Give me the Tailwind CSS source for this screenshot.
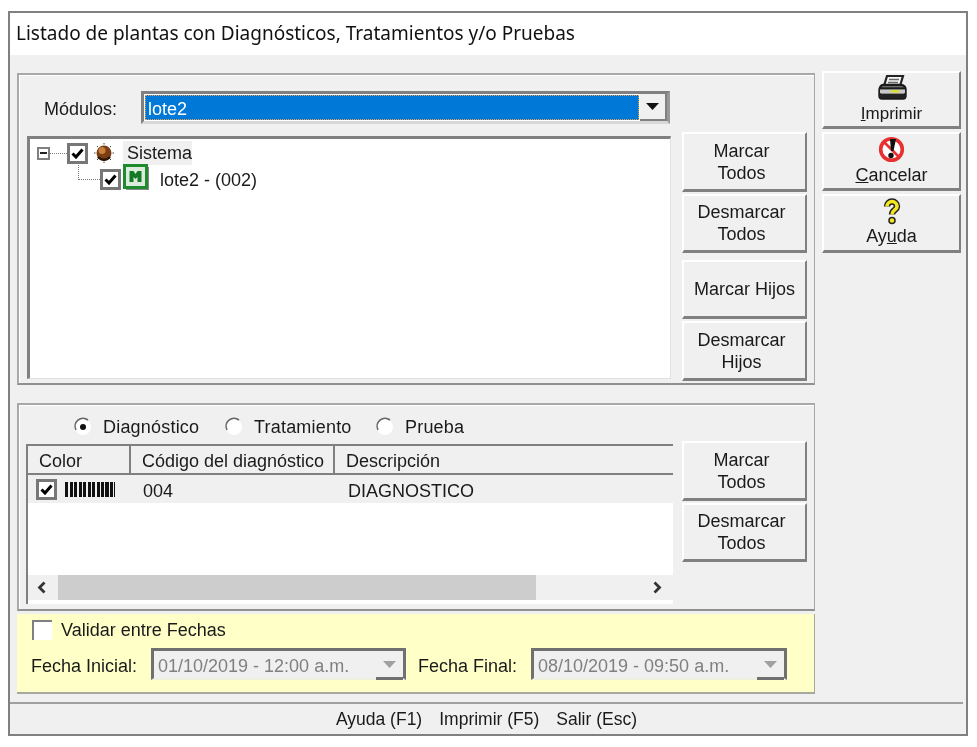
<!DOCTYPE html>
<html lang="es">
<head>
  <meta charset="UTF-8" />
  <title>Listado de plantas</title>
  <script src="https://cdn.jsdelivr.net/npm/@tailwindcss/browser@4"></script>
</head>
<body class="bg-white font-['Liberation_Sans',sans-serif] text-[18px] leading-none text-[#1a1a1a]">
  <div class="ml-[8px] mt-[11px] w-[960px] h-[725px] border-2 border-[#808080] bg-[#f0f0f0] flex flex-col blur-[0.35px]">

    <!-- Title -->
    <div class="h-[42px] shrink-0 bg-white pl-[6px] pb-[2px] flex items-center font-['Noto_Sans',sans-serif] text-[19px] text-[#111]">Listado de plantas con Diagnósticos, Tratamientos y/o Pruebas</div>

    <div class="flex-1 flex pl-[7px]">
      <!-- Left column -->
      <div class="w-[798px]">

        <!-- Modules panel -->
        <section class="mt-[18px] h-[312px] border-2 border-r border-[#a8a8a8] border-b-[#909090] shadow-[inset_1px_1px_0_#fff] flex pl-[8px]">
          <div class="w-[644px]">
            <div class="mt-[16px] flex items-center h-[33px]">
              <span class="ml-[17px] w-[97px] pt-[3px]">Módulos:</span>
              <div class="w-[529px] h-[33px] border-[3px] border-[#808080] border-r-[#999] border-b-[#d8d8d8] flex bg-white">
                <div class="flex-1 m-[1px] bg-[#0078d7] border border-dotted border-[#e8a050] text-white pl-[2px] pt-[3px] flex items-center">lote2</div>
                <div class="w-[27px] bg-[#f0f0f0] border-r-2 border-b-2 border-[#808080] flex items-center justify-center">
                  <svg width="13" height="7" viewBox="0 0 13 7"><path d="M0 0h13L6.500 7z" fill="#111"/></svg>
                </div>
              </div>
            </div>

            <!-- Tree -->
            <div class="relative mt-[12px] h-[243px] bg-white border-t-[3px] border-l-[3px] border-[#808080] border-r border-b border-r-[#e0e0e0] border-b-[#e0e0e0] pt-[2px]">
              <div class="flex items-center h-[24px]">
                <span class="ml-[7px] w-[13px] h-[13px] border-2 border-[#808080] flex items-center justify-center"><span class="w-[7px] h-[2px] bg-[#222]"></span></span>
                <span class="w-[17px] border-t border-dotted border-[#808080]"></span>
                <span class="w-[21px] h-[21px] border-[3px] border-[#777] bg-white flex items-center justify-center">
                  <svg width="13" height="11" viewBox="0 0 13 11"><path d="M1.500 5.500l3.500 3.500 6.500-7.500" fill="none" stroke="#000" stroke-width="3"/></svg>
                </span>
                <svg class="ml-[6px]" width="20" height="20" viewBox="0 0 20 20">
                  <circle cx="10" cy="10" r="7.500" fill="#7a3d14"/>
                  <circle cx="8" cy="7.500" r="3.500" fill="#c9803f"/>
                  <path d="M4 14a8 8 0 0 0 12 0" fill="none" stroke="#2b1606" stroke-width="2.500"/>
                  <path d="M10 0v1.500M10 18.500v1.500M0 10h1.500M18.500 10h1.500M3 3l1 1M17 3l-1 1M3 17l1-1M17 17l-1-1" stroke="#444"/>
                </svg>
                <span class="ml-[9px] w-[69px] h-[24px] bg-[#f0f0f0] pl-[4px] flex items-center">Sistema</span>
              </div>
              <div class="flex items-center h-[26px] mt-[1px]">
                <span class="ml-[70px] w-[21px] h-[21px] border-[3px] border-[#777] bg-white flex items-center justify-center">
                  <svg width="13" height="11" viewBox="0 0 13 11"><path d="M1.500 5.500l3.500 3.500 6.500-7.500" fill="none" stroke="#000" stroke-width="3"/></svg>
                </span>
                <svg class="ml-[2px] -mt-[4px]" width="26" height="26" viewBox="0 0 26 26">
                  <rect x="3" y="3" width="23" height="23" fill="#888"/>
                  <rect x="1.500" y="1.500" width="22" height="22" fill="#dcecdc" stroke="#1f8a2e" stroke-width="3"/>
                  <path d="M6.500 7h4l2 3 2-3h4v11h-4v-5l-2 2-2-2v5h-4z" fill="#157a25"/>
                </svg>
                <span class="ml-[11px] pt-[2px]">lote2 - (002)</span>
              </div>
              <!-- connector lines -->
              <span class="absolute left-[48px] top-[24px] h-[17px] w-[22px] border-l border-b border-dotted border-[#777]"></span>
            </div>
          </div>

          <div class="ml-[11px] mt-[57px] w-[125px] flex flex-col">
            <button class="h-[60px] pr-[6px] border-2 border-t-white border-l-white border-r-[#808080] border-b-[3px] border-b-[#808080] leading-[22px]">Marcar<br>Todos</button>
            <button class="mt-[2px] h-[59px] pr-[6px] border-2 border-t-white border-l-white border-r-[#808080] border-b-[3px] border-b-[#808080] leading-[22px]">Desmarcar<br>Todos</button>
            <button class="mt-[7px] h-[59px] border-2 border-t-white border-l-white border-r-[#808080] border-b-[3px] border-b-[#808080] leading-[22px]">Marcar Hijos</button>
            <button class="mt-[2px] h-[60px] pr-[6px] border-2 border-t-white border-l-white border-r-[#808080] border-b-[3px] border-b-[#808080] leading-[22px]">Desmarcar<br>Hijos</button>
          </div>
        </section>

        <!-- Diagnostics panel -->
        <section class="mt-[18px] h-[208px] border-2 border-r border-[#a8a8a8] border-b-[#909090] shadow-[inset_1px_1px_0_#fff] flex pl-[7px]">
          <div class="w-[647px]">
            <div class="h-[39px] pt-[4px] flex items-center tracking-[0.2px]">
              <svg class="ml-[47px]" width="20" height="20" viewBox="0 0 20 20"><circle cx="10" cy="10" r="8" fill="#fff"/><path d="M3 13A8 8 0 0 1 15 3" fill="none" stroke="#666" stroke-width="1.600"/><circle cx="10" cy="10" r="3" fill="#111"/></svg>
              <span class="ml-[10px] w-[96px]">Diagnóstico</span>
              <svg class="ml-[25px]" width="20" height="20" viewBox="0 0 20 20"><circle cx="10" cy="10" r="8" fill="#fff"/><path d="M3 13A8 8 0 0 1 15 3" fill="none" stroke="#666" stroke-width="1.600"/></svg>
              <span class="ml-[10px] w-[96px]">Tratamiento</span>
              <svg class="ml-[25px]" width="20" height="20" viewBox="0 0 20 20"><circle cx="10" cy="10" r="8" fill="#fff"/><path d="M3 13A8 8 0 0 1 15 3" fill="none" stroke="#666" stroke-width="1.600"/></svg>
              <span class="ml-[10px]">Prueba</span>
            </div>
            <div class="h-[160px] border-t-[2px] border-l-[2px] border-[#808080] bg-white flex flex-col">
              <div class="h-[29px] shrink-0 flex bg-[#f0f0f0] border-b-2 border-[#808080]">
                <div class="w-[103px] pl-[11px] pt-[3px] border-r-2 border-[#808080] flex items-center">Color</div>
                <div class="w-[204px] pl-[11px] pt-[3px] border-r-2 border-[#808080] flex items-center">Código del diagnóstico</div>
                <div class="flex-1 pl-[11px] pt-[3px] flex items-center">Descripción</div>
              </div>
              <div class="h-[28px] shrink-0 bg-[#f0f0f0] flex items-center">
                <span class="ml-[8px] w-[21px] h-[21px] border-[3px] border-[#777] bg-white flex items-center justify-center">
                  <svg width="13" height="11" viewBox="0 0 13 11"><path d="M1.500 5.500l3.500 3.500 6.500-7.500" fill="none" stroke="#000" stroke-width="3"/></svg>
                </span>
                <span class="ml-[8px] w-[50px] h-[15px] bg-[repeating-linear-gradient(90deg,#111_0,#111_3px,#f0f0f0_3px,#f0f0f0_4.500px)]"></span>
                <span class="ml-[28px] w-[205px] pt-[3px]">004</span>
                <span class="pt-[3px]">DIAGNOSTICO</span>
              </div>
              <div class="flex-1"></div>
              <div class="h-[25px] mb-[4px] shrink-0 bg-[#f0f0f0] flex items-center relative">
                <svg class="ml-[9px]" width="9" height="13" viewBox="0 0 9 13"><path d="M7.500 1.500L2.500 6.500l5 5" fill="none" stroke="#333" stroke-width="2.800"/></svg>
                <span class="ml-[12px] w-[478px] h-[25px] bg-[#cdcdcd]"></span>
                <svg class="ml-auto mr-[11px]" width="9" height="13" viewBox="0 0 9 13"><path d="M1.500 1.500l5 5-5 5" fill="none" stroke="#333" stroke-width="2.800"/></svg>
              </div>
            </div>
          </div>
          <div class="ml-[9px] mt-[36px] w-[125px] flex flex-col">
            <button class="h-[60px] pr-[6px] border-2 border-t-white border-l-white border-r-[#808080] border-b-[3px] border-b-[#808080] leading-[22px]">Marcar<br>Todos</button>
            <button class="mt-[2px] h-[59px] pr-[6px] border-2 border-t-white border-l-white border-r-[#808080] border-b-[3px] border-b-[#808080] leading-[22px]">Desmarcar<br>Todos</button>
          </div>
        </section>

        <!-- Date filter -->
        <section class="mt-[3px] h-[80px] bg-[#ffffc8] border-b-2 border-r border-[#a8a8a0] pl-[14px]">
          <div class="h-[31px] flex items-center">
            <span class="ml-[1px] w-[20px] h-[20px] bg-white border-t-2 border-l-2 border-[#808080]"></span>
            <span class="ml-[9px]">Validar entre Fechas</span>
          </div>
          <div class="mt-[3px] flex items-center">
            <span class="w-[120px] pt-[3px]">Fecha Inicial:</span>
            <div class="w-[255px] h-[32px] border-t-[3px] border-l-[3px] border-r-[3px] border-[#707070] border-b-2 border-b-[#f0f0e0] bg-[#f0f0f0] text-[#808080] flex items-center pl-[4px]">
              <span class="pt-[3px]">01/10/2019 - 12:00 a.m.</span>
              <span class="ml-auto -mb-[2px] w-[27px] h-[29px] border-b-[3px] border-[#707070] flex items-center justify-center"><svg width="13" height="7" viewBox="0 0 13 7"><path d="M0 0h13L6.500 7z" fill="#a0a0a0"/></svg></span>
            </div>
            <span class="ml-[12px] w-[113px] pt-[3px]">Fecha Final:</span>
            <div class="w-[256px] h-[32px] border-t-[3px] border-l-[3px] border-r-[3px] border-[#707070] border-b-2 border-b-[#f0f0e0] bg-[#f0f0f0] text-[#808080] flex items-center pl-[4px]">
              <span class="pt-[3px]">08/10/2019 - 09:50 a.m.</span>
              <span class="ml-auto -mb-[2px] w-[27px] h-[29px] border-b-[3px] border-[#707070] flex items-center justify-center"><svg width="13" height="7" viewBox="0 0 13 7"><path d="M0 0h13L6.500 7z" fill="#a0a0a0"/></svg></span>
            </div>
          </div>
        </section>
      </div>

      <!-- Action buttons -->
      <div class="ml-[7px] mt-[16px] w-[139px] flex flex-col">
        <button class="h-[58px] border-2 border-t-white border-l-white border-r-[#808080] border-b-[3px] border-b-[#808080] flex flex-col items-center pt-[1px]">
          <svg width="30" height="28" viewBox="0 0 30 28">
            <path d="M10 2h16l-3 10H7z" fill="#f4f4f4" stroke="#222" stroke-width="2.200"/>
            <path d="M12 5.500h10M11 8.500h10" stroke="#666" stroke-width="1.500"/>
            <path d="M6 11h18c3 0 4.500 2 4.500 4v7c0 1.500-1 2.500-2.500 2.500H5c-1.500 0-2.500-1-2.500-2.500v-6c0-2 1.500-5 3.500-5z" fill="#8a8a8a" stroke="#1c1c1c" stroke-width="2.400"/>
            <path d="M3 14.500h25" stroke="#1c1c1c" stroke-width="2.500"/>
            <rect x="3" y="15.500" width="25" height="3.500" fill="#c8c8c8"/>
            <rect x="14" y="16" width="8" height="2.500" fill="#dce030"/>
            <rect x="3" y="20" width="25" height="4" fill="#222"/>
          </svg>
          <span class="text-[17px] mt-[3px]"><u>I</u>mprimir</span>
        </button>
        <button class="mt-[3px] h-[59px] border-2 border-t-white border-l-white border-r-[#808080] border-b-[3px] border-b-[#808080] flex flex-col items-center pt-[2px]">
          <svg width="27" height="27" viewBox="0 0 27 27">
            <circle cx="13.500" cy="13.500" r="10.800" fill="#fff" stroke="#e83030" stroke-width="3.600"/>
            <path d="M6.500 6.500l14 14" stroke="#e83030" stroke-width="2.600"/>
            <path d="M12 3h6l-2.500 12h-2.500z" fill="#111"/>
            <circle cx="13" cy="19.500" r="2.700" fill="#111"/>
          </svg>
          <span class="mt-[3px]"><u>C</u>ancelar</span>
        </button>
        <button class="mt-[3px] h-[59px] border-2 border-t-white border-l-white border-r-[#808080] border-b-[3px] border-b-[#808080] flex flex-col items-center pt-[2px]">
          <svg width="18" height="27" viewBox="0 0 18 27">
            <path d="M4 8.500a5 5 0 0 1 10 0c0 3.500-5 3.500-5 8" fill="none" stroke="#222" stroke-width="6.400"/>
            <path d="M4 8.500a5 5 0 0 1 10 0c0 3.500-5 3.500-5 8" fill="none" stroke="#f5e81e" stroke-width="3.600"/>
            <circle cx="9" cy="22.500" r="3" fill="#f5e81e" stroke="#222" stroke-width="1.500"/>
          </svg>
          <span class="mt-[2px]">Ay<u>u</u>da</span>
        </button>
      </div>
    </div>

    <!-- Status bar -->
    <div class="h-[32px] shrink-0 mr-[3px] pt-[1px] border-t-2 border-[#a0a0a0] flex items-center justify-center gap-[17px] text-[17.5px]">
      <span>Ayuda (F1)</span><span>Imprimir (F5)</span><span>Salir (Esc)</span>
    </div>
  </div>
</body>
</html>
